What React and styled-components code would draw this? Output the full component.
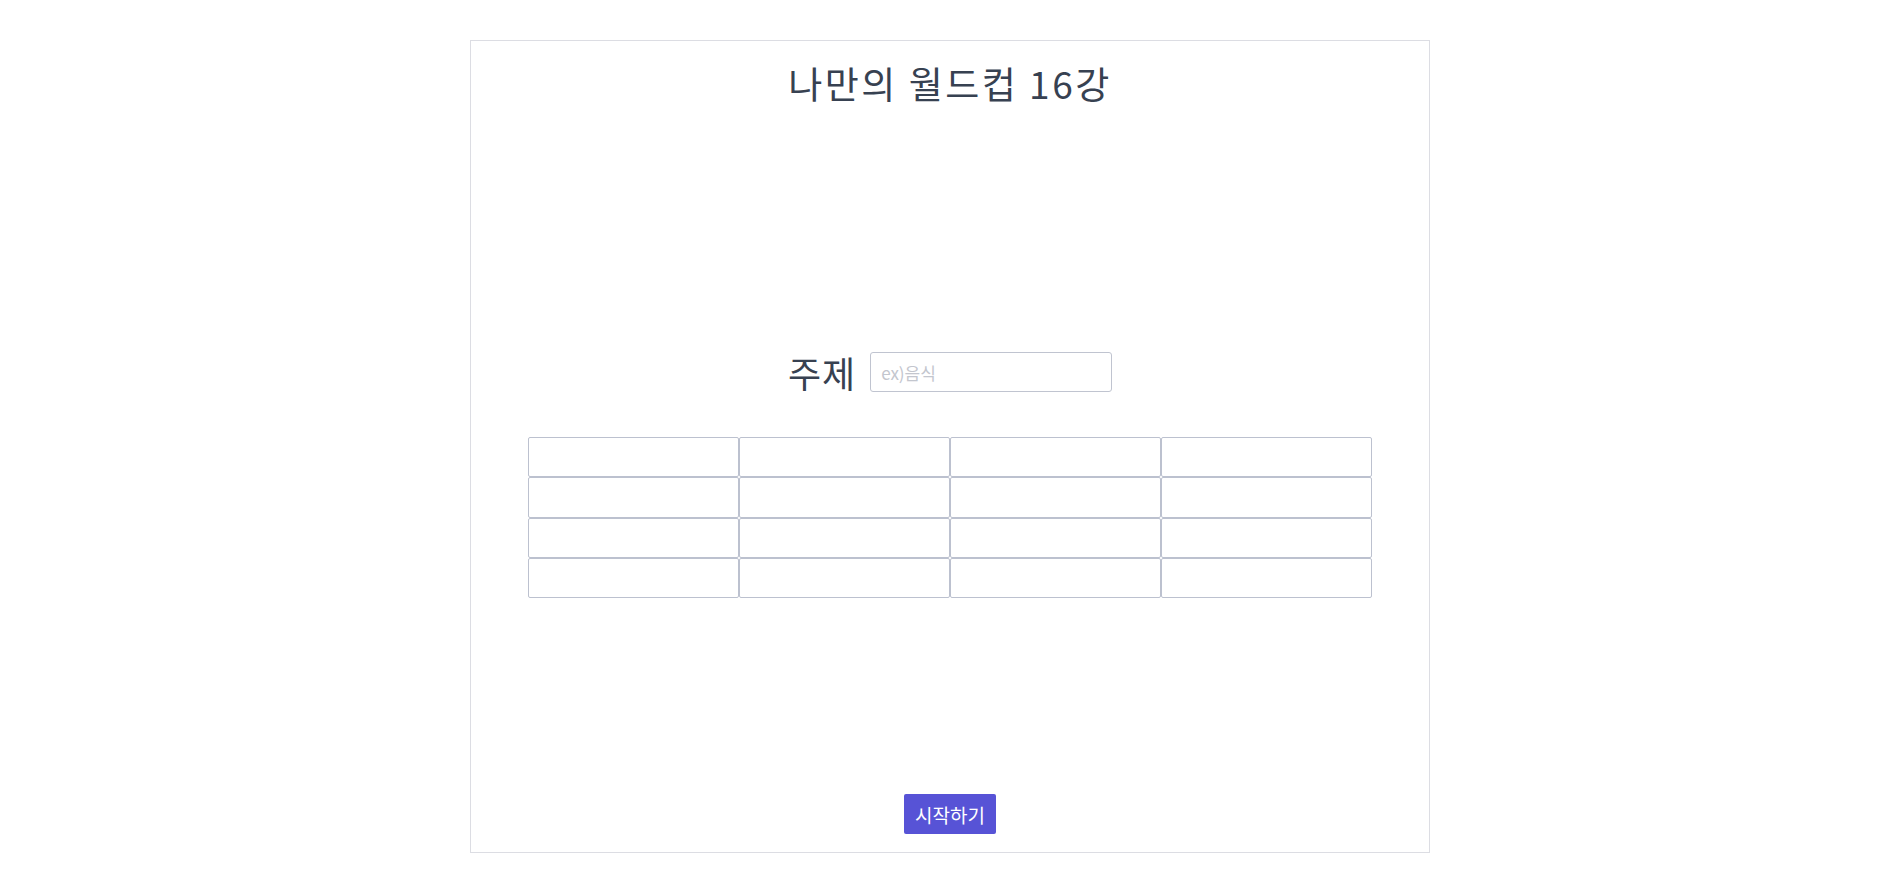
import React from 'react'
import styled, { createGlobalStyle } from 'styled-components'

const GlobalStyle = createGlobalStyle`
  body {
    margin: 0;
    background: #fff;
    font-family: 'Noto Sans CJK KR', 'Noto Sans', sans-serif;
    color: #374151;
  }
`

const Page = styled.div`
  display: flex;
  justify-content: center;
  padding-top: 40px;
`

const Card = styled.div`
  width: 960px;
  height: 813px;
  box-sizing: border-box;
  border: 1px solid #dcdde3;
  display: flex;
  flex-direction: column;
  align-items: center;
  padding: 22px 0 18px;
`

const Title = styled.h1`
  margin: 0;
  font-size: 37px;
  font-weight: 400;
  line-height: 40px;
  letter-spacing: 2.5px;
`

const Topic = styled.div`
  display: flex;
  align-items: center;
  gap: 14px;
  margin-top: 249px;
`

const TopicLabel = styled.span`
  font-size: 36px;
  line-height: 40px;
  letter-spacing: 1px;
`

const TextInput = styled.input`
  box-sizing: border-box;
  width: 242px;
  height: 40px;
  border: 1px solid #c0c4d0;
  border-radius: 3px;
  padding: 0 10px;
  font-family: inherit;
  font-size: 17px;
  color: #374151;
  outline: none;

  &::placeholder {
    color: #c3c6ce;
  }
`

const Grid = styled.div`
  display: grid;
  grid-template-columns: repeat(4, 211px);
  grid-auto-rows: 40.25px;
  margin-top: 45px;
`

const Cell = styled.input`
  box-sizing: border-box;
  width: 100%;
  height: 100%;
  border: 1px solid #bcc1cf;
  border-radius: 2px;
  font-family: inherit;
  font-size: 16px;
  padding: 0 8px;
  outline: none;
`

const StartButton = styled.button`
  margin-top: auto;
  height: 40px;
  padding: 0 11px;
  border: none;
  border-radius: 2px;
  background: #5753d6;
  color: #fff;
  font-family: inherit;
  font-size: 19px;
  cursor: pointer;
`

const App = () => (
  <Page>
    <GlobalStyle />
    <Card>
      <Title>나만의 월드컵 16강</Title>
      <Topic>
        <TopicLabel>주제</TopicLabel>
        <TextInput placeholder="ex)음식" />
      </Topic>
      <Grid>
        {Array.from({ length: 16 }).map((_, i) => (
          <Cell key={i} />
        ))}
      </Grid>
      <StartButton>시작하기</StartButton>
    </Card>
  </Page>
)

export default App
